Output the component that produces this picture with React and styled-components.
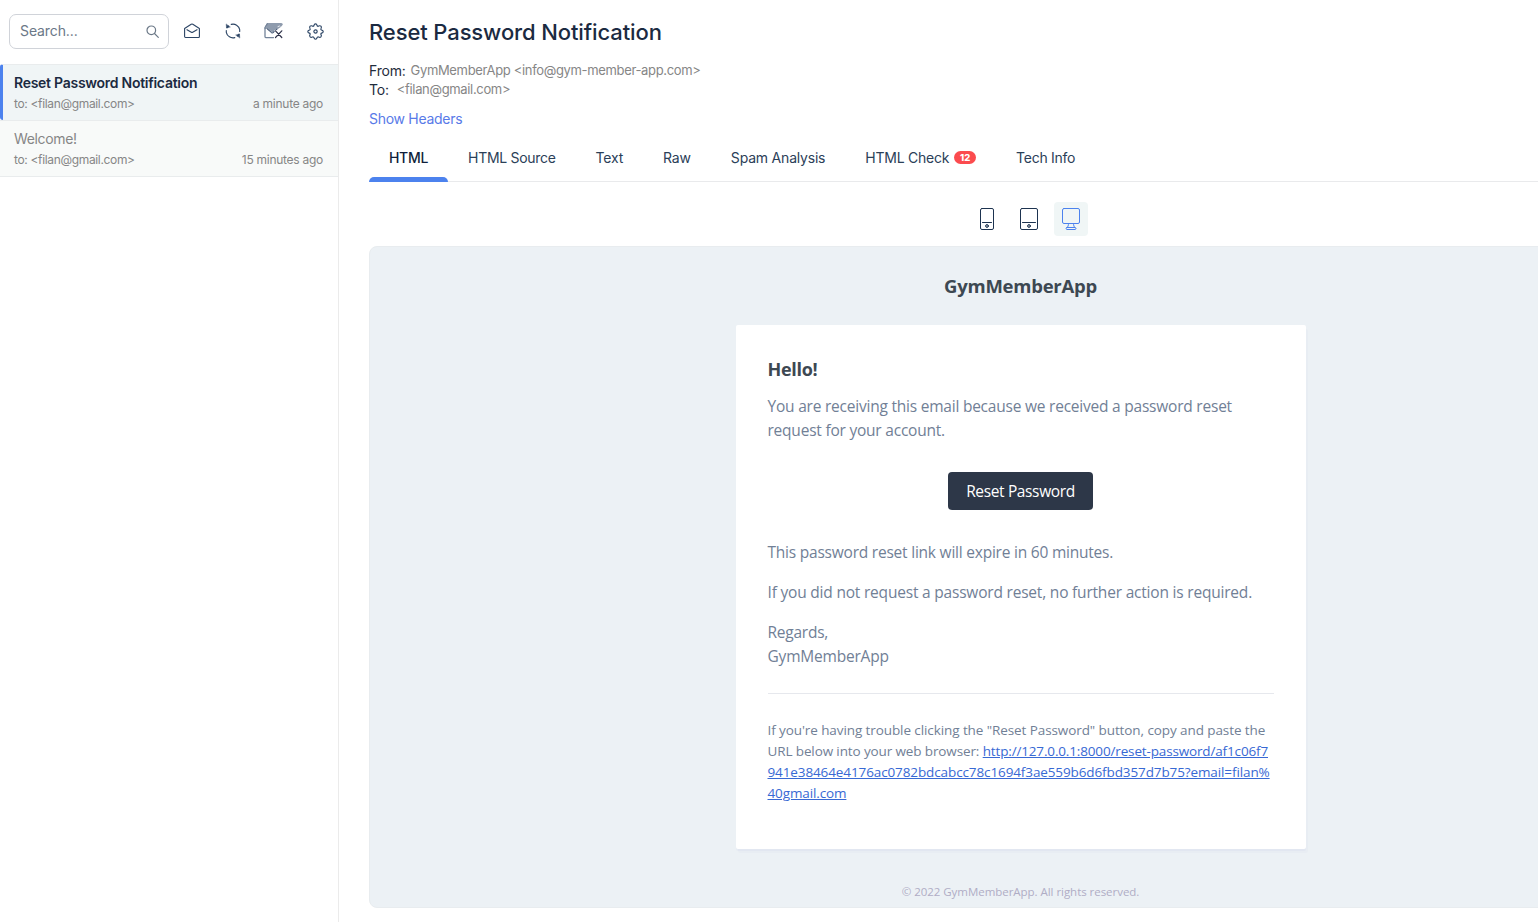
import React from "react";
import styled, { createGlobalStyle, css } from "styled-components";

const Global = createGlobalStyle`
  *{box-sizing:border-box}
  html,body{margin:0;height:100%;overflow:hidden;background:#fff}
  body{font-family:Inter,"Liberation Sans",sans-serif;font-size:14px;color:#1f2d3d}
  button{font:inherit;background:none;border:0;padding:0;margin:0}
  p,h1,h2{margin:0}
`;

const Shell = styled.div`display:flex;width:1538px;height:922px;overflow:hidden;`;
const Sidebar = styled.aside`flex:0 0 339px;border-right:1px solid #ebebeb;`;
const Toolbar = styled.div`
  display:flex;align-items:center;height:64px;padding:0 12.500px 2px 9px;justify-content:space-between;
`;
const SearchBox = styled.label`
  display:flex;align-items:center;justify-content:space-between;width:160px;height:35px;
  padding:0 9px 0 10px;border:1px solid #d0d3d9;border-radius:7px;color:#6b7887;line-height:20px;
  letter-spacing:-.1px;
`;
const ToolButton = styled.button`
  display:flex;align-items:center;justify-content:center;width:20px;height:20px;color:#2b4464;
  margin-right:${(p) => p.$gap || 0}px;
`;
const Tools = styled.div`display:flex;`;

const MailItem = styled.article`
  height:56px;padding:8px 15px 0 14px;border-top:1px solid #e9eced;
  background:${(p) => (p.$active ? "#f0f5f6" : "#f8faf9")};
  ${(p) => p.$active && css`border-left:3px solid #4c82ee;padding-left:11px;border-radius:3px 0 0 3px;`}
  ${(p) => p.$last && css`height:57px;border-bottom:1px solid #e9eced;`}
`;
const MailSubject = styled.div`
  font-size:14px;line-height:20px;letter-spacing:${(p) => (p.$active ? "-.27px" : "-.36px")};
  font-weight:${(p) => (p.$active ? 600 : 400)};color:${(p) => (p.$active ? "#1b2a41" : "#868686")};
`;
const MailMeta = styled.div`
  display:flex;justify-content:space-between;margin-top:2px;font-size:12px;line-height:18px;color:#868686;
  letter-spacing:-.34px;
`;
const MailTime = styled.span`letter-spacing:-.27px;`;

const Main = styled.main`flex:1;min-width:0;padding:18px 0 0 30px;overflow:hidden;`;
const Title = styled.h1`font-size:22px;line-height:28px;font-weight:500;color:#1b2a41;letter-spacing:-.11px;`;
const Fields = styled.div`margin-top:15px;`;
const Field = styled.div`display:flex;gap:${(p) => p.$gap}px;line-height:19px;font-size:14px;letter-spacing:-.2px;`;
const FieldValue = styled.span`font-size:13px;color:#868686;letter-spacing:-.34px;`;
const HeaderLink = styled.a`display:block;margin-top:10px;line-height:19px;color:#587ae8;letter-spacing:-.29px;`;
const Tabs = styled.nav`display:flex;height:54px;border-bottom:1px solid #e9eaec;`;
const Tab = styled.div`
  position:relative;display:flex;align-items:center;gap:5px;padding:7px 20px 0;height:53px;line-height:20px;
  letter-spacing:${(p) => p.$ls}px;
  color:${(p) => (p.$active ? "#101f3b" : "#2b4058")};font-weight:${(p) => (p.$active ? 500 : 400)};
  ${(p) => p.$active && css`&::after{content:"";position:absolute;left:0;right:0;bottom:-1px;height:5px;
    border-radius:5px 5px 0 0;background:#4c82ee;}`}
`;
const Badge = styled.span`
  width:22px;height:13px;border-radius:7px;background:#fb4b4e;color:#fff;text-align:center;
  font-size:9.5px;line-height:13px;font-weight:800;letter-spacing:0;margin-top:-2px;
`;
const Devices = styled.div`display:flex;gap:8px;margin:20px 0 10px 601px;`;
const DeviceButton = styled.button`
  display:flex;align-items:center;justify-content:center;width:34px;height:34px;border-radius:4px;
  color:${(p) => (p.$active ? "#4c82ee" : "#1d3350")};background:${(p) => (p.$active ? "#f0f6f6" : "none")};
`;

const Preview = styled.section`
  width:1303px;height:662px;border:1px solid #e8ecef;border-radius:8px;background:#ecf1f5;
  display:flex;flex-direction:column;align-items:center;
  font-family:"Open Sans","Noto Sans",sans-serif;color:#718096;
`;
const Brand = styled.h2`
  margin-top:26px;font-size:18.5px;line-height:26px;font-weight:700;color:#3d4852;letter-spacing:-.24px;
`;
const Card = styled.div`
  display:flex;flex-direction:column;width:570px;height:524px;margin-top:26px;padding:32px;
  background:#fff;border-radius:2px;box-shadow:0 2px 0 rgba(0,0,150,.025),2px 4px 0 rgba(0,0,150,.015);
`;
const Hello = styled.h2`font-size:18px;line-height:24px;font-weight:700;color:#3d4852;letter-spacing:-.3px;`;
const Copy = styled.p`margin-top:${(p) => p.$top}px;font-size:15.5px;line-height:24px;`;
const Line = styled.span`display:block;white-space:nowrap;letter-spacing:${(p) => p.$ls || 0}px;`;
const ResetButton = styled.button`
  align-self:center;margin:30px 0 0;width:145px;height:38px;border-radius:4px;background:#2d3748;color:#fff;
  font-size:15.5px;line-height:38px;white-space:nowrap;
`;
const Divider = styled.div`height:1px;margin-top:25px;background:#e6e8ed;flex:none;`;
const Small = styled.p`margin-top:26px;font-size:13.5px;line-height:21px;`;
const Url = styled.a`color:#3869d4;text-decoration:underline;letter-spacing:${(p) => p.$ls || 0}px;`;
const Footer = styled.p`margin-top:34px;font-size:11.5px;line-height:18px;color:#b0adc5;`;

const Svg = ({ w, h, children, sw = 1 }) => (
  <svg width={w} height={h} viewBox={`0 0 ${w} ${h}`} fill="none" stroke="currentColor" strokeWidth={sw}
    strokeLinecap="round" strokeLinejoin="round">{children}</svg>
);
const SearchIcon = () => (
  <Svg w={13} h={13} sw={1.2}><circle cx="5.3" cy="5.3" r="4.3" /><path d="M8.5 8.5l3.8 3.8" /></Svg>
);
const OpenMailIcon = () => (
  <Svg w={16} h={16} sw={1.1}>
    <path d="M.6 5.500 7.200 1.300q.8-.5 1.600 0l6.600 4.200v8.100a.9.9 0 0 1-.9.9h-13a.9.9 0 0 1-.9-.9z" />
    <path d="M3 6.700l4.300 2.500q.7.4 1.400 0L13 6.700" />
  </Svg>
);
const RefreshIcon = () => (
  <Svg w={16} h={16} sw={1.1}>
    <path d="M6.200 1.400a6.800 6.800 0 0 1 8.500 5.300v1.800M9.800 14.600a6.800 6.800 0 0 1-8.500-5.300V7.500" />
    <path d="M3.500 3a6.800 6.800 0 0 0-1.500 1.800M12.500 13a6.800 6.800 0 0 0 1.500-1.800" />
    <path d="M1.200 1.300l.3 3.600 3.500-.8zM14.800 14.700l-.3-3.600-3.500.8z" fill="currentColor" strokeWidth=".4" />
  </Svg>
);
const DeleteMailIcon = () => (
  <Svg w={19} h={16}>
    <path d="M3.500.5h14a.8.8 0 0 1 .8.900L16.800 4l-3.300 1.500-4.500 4-4.500-4H1.200z" fill="#8e9bad" stroke="#8e9bad" />
    <path d="M1 5.500v8.300a.8.8 0 0 0 .8.800h7.700M1 5.500v-1L3.300.8" stroke="#74849a" strokeWidth="1.300" />
    <path d="M3.500 6 7.500 9.700q.8.600 1.600 0L13 6.200" stroke="#4d607c" strokeWidth="1.100" />
    <path d="M2.500 7v6M5 8.800l2.500 2.300q.8.600 1.600 0l1.200-1" stroke="#fff" strokeWidth=".8" />
    <path d="M14 3.600l1.500-.6M15.500 5.500l1.900-2.200" stroke="#fff" strokeWidth=".8" />
    <path d="M11.500 7.800l6.300 6.700M17.800 7.800l-6.300 6.700" stroke="#fff" strokeWidth="2.200" />
    <path d="M11.500 7.800l6.300 6.700M17.800 7.800l-6.300 6.700" stroke="#2d3149" strokeWidth="1.200" />
  </Svg>
);
const GearIcon = () => (
  <Svg w={17} h={17} sw={1.1}>
    <g transform="translate(.2 .2) scale(1.040)">
      <path d="M6.500 2.200C6.700 1.100 7.200.7 8 .7s1.300.4 1.500 1.500c.2.700.9 1 1.500.6 1-.6 1.600-.5 2.200.1.600.6.7 1.200.1 2.200-.4.600-.1 1.300.6 1.500 1.100.2 1.500.6 1.500 1.400s-.4 1.300-1.500 1.500c-.7.200-1 .9-.6 1.500.6 1 .5 1.600-.1 2.200-.6.600-1.200.7-2.200.1-.6-.4-1.300-.1-1.500.6-.2 1.100-.7 1.500-1.500 1.500s-1.300-.4-1.500-1.500c-.2-.7-.9-1-1.500-.6-1 .6-1.600.5-2.200-.1-.6-.6-.7-1.200-.1-2.200.4-.6.1-1.300-.6-1.500C1 9.300.6 8.800.6 8S1 6.800 2.100 6.600c.7-.2 1-.9.6-1.500-.6-1-.5-1.600.1-2.200.6-.6 1.200-.7 2.200-.1.600.4 1.300.1 1.500-.6z" />
      <circle cx="8" cy="8" r="1.600" />
    </g>
  </Svg>
);
const PhoneIcon = () => (
  <Svg w={14} h={22}><rect x=".5" y=".5" width="13" height="21" rx="1.500" /><path d="M2.500 14.500h9" /><circle cx="7" cy="18" r="1.400" fill="#b4bdc8" /></Svg>
);
const TabletIcon = () => (
  <Svg w={18} h={22}><rect x=".5" y=".5" width="17" height="21" rx="1.500" /><path d="M2.500 14.500h13" /><circle cx="9" cy="18" r="1.400" fill="#b4bdc8" /></Svg>
);
const DesktopIcon = () => (
  <Svg w={18} h={22}><rect x=".5" y=".5" width="17" height="15" rx="1.500" /><path d="M6.500 15.500c0 2-.6 3.300-1.200 4M11.500 15.500c0 2 .6 3.300 1.200 4M5 19.500h8c1.300 0 1.300 2 0 2H5c-1.300 0-1.300-2 0-2z" /></Svg>
);

const tabs = [
  { label: "HTML", ls: -0.3, active: true },
  { label: "HTML Source", ls: -0.3 },
  { label: "Text", ls: -0.2 },
  { label: "Raw", ls: -0.16 },
  { label: "Spam Analysis", ls: -0.2 },
  { label: "HTML Check", ls: -0.25, count: 12 },
  { label: "Tech Info", ls: -0.27 },
];

export default function App() {
  return (
    <>
      <Global />
      <Shell>
        <Sidebar>
          <Toolbar>
            <SearchBox>Search...<SearchIcon /></SearchBox>
            <Tools>
              <ToolButton $gap={21}><OpenMailIcon /></ToolButton>
              <ToolButton $gap={21}><RefreshIcon /></ToolButton>
              <ToolButton $gap={22}><DeleteMailIcon /></ToolButton>
              <ToolButton><GearIcon /></ToolButton>
            </Tools>
          </Toolbar>
          <MailItem $active>
            <MailSubject $active>Reset Password Notification</MailSubject>
            <MailMeta><span>to: &lt;filan@gmail.com&gt;</span><MailTime>a minute ago</MailTime></MailMeta>
          </MailItem>
          <MailItem $last>
            <MailSubject>Welcome!</MailSubject>
            <MailMeta><span>to: &lt;filan@gmail.com&gt;</span><MailTime>15 minutes ago</MailTime></MailMeta>
          </MailItem>
        </Sidebar>
        <Main>
          <Title>Reset Password Notification</Title>
          <Fields>
            <Field $gap={5}>From:<FieldValue>GymMemberApp &lt;info@gym-member-app.com&gt;</FieldValue></Field>
            <Field $gap={8}>To:<FieldValue>&lt;filan@gmail.com&gt;</FieldValue></Field>
          </Fields>
          <HeaderLink>Show Headers</HeaderLink>
          <Tabs>
            {tabs.map((t) => (
              <Tab key={t.label} $active={t.active} $ls={t.ls}>{t.label}{t.count && <Badge>{t.count}</Badge>}</Tab>
            ))}
          </Tabs>
          <Devices>
            <DeviceButton><PhoneIcon /></DeviceButton>
            <DeviceButton><TabletIcon /></DeviceButton>
            <DeviceButton $active><DesktopIcon /></DeviceButton>
          </Devices>
          <Preview>
            <Brand>GymMemberApp</Brand>
            <Card>
              <Hello>Hello!</Hello>
              <Copy $top={13}>
                <Line $ls={-0.22}>You are receiving this email because we received a password reset</Line>
                <Line $ls={-0.22}>request for your account.</Line>
              </Copy>
              <ResetButton><Line $ls={-0.36}>Reset Password</Line></ResetButton>
              <Copy $top={30}><Line $ls={-0.22}>This password reset link will expire in 60 minutes.</Line></Copy>
              <Copy $top={16}><Line $ls={-0.2}>If you did not request a password reset, no further action is required.</Line></Copy>
              <Copy $top={16}><Line $ls={-0.24}>Regards,</Line><Line $ls={-0.2}>GymMemberApp</Line></Copy>
              <Divider />
              <Small>
                <Line $ls={-0.09}>If you're having trouble clicking the "Reset Password" button, copy and paste the</Line>
                <Line $ls={-0.12}>URL below into your web browser: <Url $ls={-0.15}>http://127.0.0.1:8000/reset-password/af1c06f7</Url></Line>
                <Line><Url $ls={-0.11}>941e38464e4176ac0782bdcabcc78c1694f3ae559b6d6fbd357d7b75?email=filan%</Url></Line>
                <Line><Url $ls={-0.12}>40gmail.com</Url></Line>
              </Small>
            </Card>
            <Footer><Line $ls={-0.04}>© 2022 GymMemberApp. All rights reserved.</Line></Footer>
          </Preview>
        </Main>
      </Shell>
    </>
  );
}
